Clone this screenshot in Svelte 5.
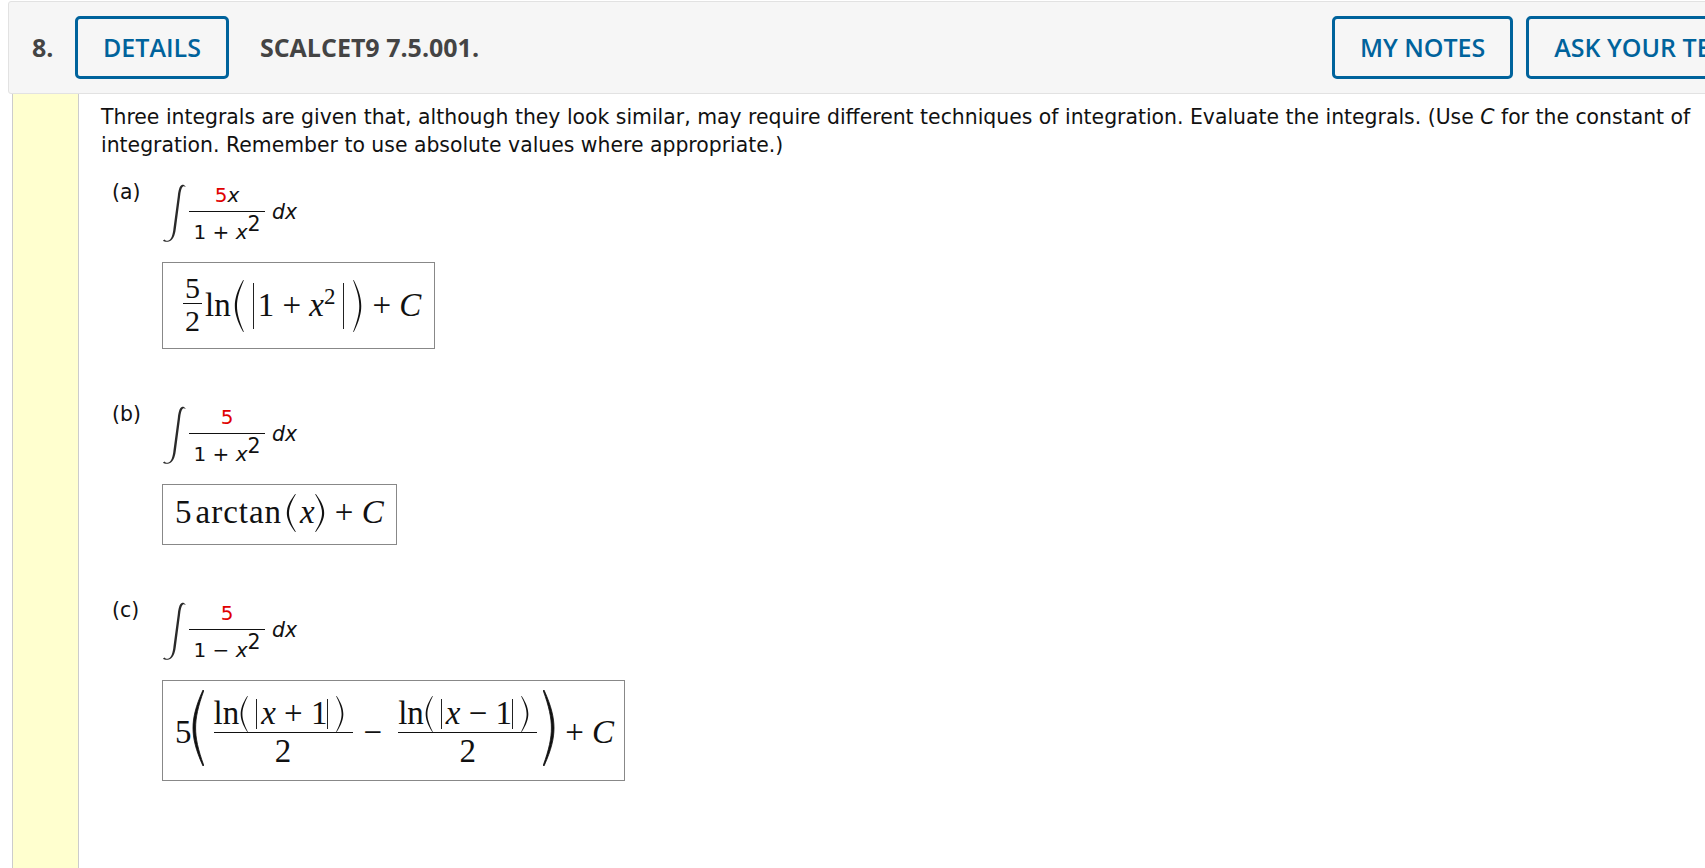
<script>
  const parts = [
    { label: '(a)', num: '5', numVar: 'x', sign: '+' },
    { label: '(b)', num: '5', numVar: '', sign: '+' },
    { label: '(c)', num: '5', numVar: '', sign: '−' }
  ];
</script>

{#snippet paren(h, w, right, cls)}
  <svg class="paren {cls}" class:right width={w} height={h} viewBox="0 0 12 60" preserveAspectRatio="none" aria-hidden="true">
    <path d="M11 0 C3.5 13 1 22 1 30 C1 38 3.5 47 11 60 L11.8 59.6 C6 47 3.6 38 3.6 30 C3.6 22 6 13 11.8 .4Z" />
  </svg>
{/snippet}

{#snippet integrand(part)}
  <div class="integrand">
    <svg class="integral" width="24" height="58" viewBox="0 0 24 58" aria-hidden="true">
      <path d="M23.5 2.5 C22.5 1 21 .5 19.8 1 C17.5 2 16.5 6 15.8 12 L11.5 44 C11 50 9.5 55.5 6.5 56.5 C5 57 3.5 56.8 2.5 55.5 L1 56.5 C2 57.8 4 58 6 57.8 C10.5 57.2 13 52 13.8 45 L18 13 C18.6 7 19.5 3.5 21 2.5 C22 2 22.8 2.3 23.2 3 Z" />
    </svg>
    <div class="frac">
      <div class="num"><span class="red">{part.num}</span>{#if part.numVar}<i>{part.numVar}</i>{/if}</div>
      <div class="den">1 {part.sign} <i>x</i><sup>2</sup></div>
    </div>
    <span class="dx"><i>dx</i></span>
  </div>
{/snippet}

{#snippet absFrac(sign)}
  <span class="mfrac wide">
    <span class="mnum">
      <span>ln</span>
      {@render paren(36, 8, false, 'ml1')}
      <span class="bar ml8"></span>
      <span class="ml4"><i>x</i> {sign} 1</span>
      <span class="bar"></span>
      {@render paren(36, 8, true, 'ml8')}
    </span>
    <span class="mden">2</span>
  </span>
{/snippet}

<div class="page">
  <header class="qhead">
    <span class="qnum">8.</span>
    <button class="btn">DETAILS</button>
    <span class="qtitle">SCALCET9 7.5.001.</span>
    <button class="btn">MY NOTES</button>
    <button class="btn">ASK YOUR TEACHER</button>
  </header>

  <div class="qbody">
    <div class="strip"></div>
    <div class="content">
      <p class="intro">Three integrals are given that, although they look similar, may require different techniques of integration. Evaluate the integrals. (Use <i>C</i> for the constant of<br />integration. Remember to use absolute values where appropriate.)</p>

      <div class="part">
        <span class="label">{parts[0].label}</span>
        <div class="work">
          {@render integrand(parts[0])}
          <div class="answer ans-a math">
            <span class="mfrac small"><span class="mnum">5</span><span class="mden">2</span></span>
            <span>ln</span>
            {@render paren(52, 10, false, 'ml3')}
            <span class="bar tall ml9"></span>
            <span class="ml4">1 + <i>x</i><sup>2</sup></span>
            <span class="bar tall ml8"></span>
            {@render paren(52, 9, true, 'ml9')}
            <span class="ml10">+ <i>C</i></span>
          </div>
        </div>
      </div>

      <div class="part">
        <span class="label">{parts[1].label}</span>
        <div class="work">
          {@render integrand(parts[1])}
          <div class="answer ans-b math">
            <span>5</span>
            <span class="fn ml4">arctan</span>
            {@render paren(38, 10, false, 'ml4')}
            <i class="ml4">x</i>
            {@render paren(38, 10, true, '')}
            <span class="ml10">+ <i>C</i></span>
          </div>
        </div>
      </div>

      <div class="part">
        <span class="label">{parts[2].label}</span>
        <div class="work">
          {@render integrand(parts[2])}
          <div class="answer ans-c math">
            <span>5</span>
            {@render paren(76, 12, false, 'big')}
            {@render absFrac('+')}
            <span class="minus">−</span>
            {@render absFrac('−')}
            {@render paren(76, 12, true, 'big close')}
            <span class="ml10">+ <i>C</i></span>
          </div>
        </div>
      </div>
    </div>
  </div>
</div>

<style>
  :global(html), :global(body) {
    overflow: hidden;
    background: #fff;
  }

  .page {
    min-height: 100vh;
    display: flex;
    flex-direction: column;
    padding-top: 1px;
    box-sizing: border-box;
  }

  .qhead {
    display: flex;
    align-items: center;
    flex: none;
    height: 93px;
    box-sizing: border-box;
    margin: 0 -4px 0 8px;
    padding-left: 23px;
    overflow: hidden;
    background: #f6f6f6;
    border: 1px solid #e2e2e2;
    border-radius: 3px;
    font-family: "Open Sans", sans-serif;
    font-size: 25px;
    font-weight: 600;
    color: #444;
  }

  .qnum {
    flex: none;
    width: 43px;
    padding-bottom: 2px;
    font-weight: 700;
  }

  .qtitle {
    flex: none;
    width: 1072px;
    margin-left: 18px;
    padding-bottom: 2px;
    font-weight: 700;
  }

  .btn {
    flex: none;
    height: 63px;
    padding: 0 25px 2px;
    margin-right: 13px;
    background: transparent;
    border: 3px solid #00639c;
    border-radius: 5px;
    color: #00639c;
    font: inherit;
  }

  .qbody {
    flex: 1;
    display: flex;
  }

  .strip {
    flex: none;
    width: 65px;
    margin-left: 12px;
    background: #ffffcf;
    border-left: 1px solid #ccc;
    border-right: 1px solid #ccc;
  }

  .content {
    flex: 1;
    padding-left: 22px;
    font-family: "DejaVu Sans", sans-serif;
    font-size: 20.4px;
    color: #111;
  }

  .intro {
    margin: 9px 0 0;
    line-height: 28px;
    white-space: nowrap;
  }

  .part {
    display: flex;
    margin: 20px 0 52px;
  }

  .part + .part {
    margin-top: 0;
  }

  .label {
    width: 50px;
    margin-left: 11px;
    line-height: 27px;
  }

  .integrand {
    display: flex;
    align-items: center;
    height: 65px;
    margin-bottom: 18px;
    font-size: 20px;
  }

  .integral {
    flex: none;
    fill: #2a2a2a;
    margin: 2px 3px 0 0;
  }

  .frac {
    display: flex;
    flex-direction: column;
    align-items: center;
    width: 76px;
  }

  .num {
    width: 100%;
    text-align: center;
    line-height: 32px;
    padding-top: 2px;
    border-bottom: 1px solid #111;
  }

  .den {
    padding-top: 6px;
    line-height: 28px;
    white-space: pre;
  }

  .den sup {
    font-size: 20.5px;
    line-height: 0;
    vertical-align: 8px;
  }

  .red {
    color: #e00000;
  }

  .dx {
    margin-left: 7px;
    font-size: 20.4px;
  }

  .answer {
    display: inline-flex;
    align-items: center;
    box-sizing: border-box;
    border: 1px solid #888;
    color: #111;
    white-space: pre;
  }

  .ans-a {
    height: 87px;
    padding: 0 13px 0 20px;
  }

  .ans-b {
    height: 61px;
    padding: 0 12px 4px 12px;
  }

  .ans-c {
    height: 101px;
    padding: 3px 10px 0 12px;
  }

  .math {
    font-family: "Liberation Serif", serif;
    font-size: 33px;
  }

  .math sup {
    font-size: 23px;
    line-height: 0;
    vertical-align: 12px;
  }

  .fn {
    letter-spacing: 1px;
  }

  .paren {
    flex: none;
    fill: #111;
  }

  .paren.right {
    transform: scaleX(-1);
  }

  .paren.big {
    margin-bottom: 8px;
    stroke: #111;
    stroke-width: 0.7px;
    vector-effect: non-scaling-stroke;
  }

  .paren.close {
    margin-left: 6px;
  }

  .bar {
    flex: none;
    display: inline-block;
    width: 1px;
    height: 30px;
    background: #222;
  }

  .bar.tall {
    height: 46px;
  }

  .mfrac {
    display: inline-flex;
    flex-direction: column;
    align-items: center;
  }

  .mfrac .mnum {
    display: flex;
    align-items: center;
    align-self: stretch;
    justify-content: center;
    border-bottom: 1.5px solid #111;
  }

  .mfrac.small {
    width: 19px;
    margin-right: 3px;
    font-size: 30px;
  }

  .mfrac.small .mnum {
    height: 30px;
  }

  .mfrac.small .mden {
    line-height: 34px;
  }

  .mfrac.wide {
    width: 139px;
    margin-left: 10px;
  }

  .mfrac.wide .mnum {
    height: 36px;
    justify-content: flex-start;
  }

  .mfrac.wide .mden {
    line-height: 36px;
  }

  .minus {
    margin: 0 6px 0 11px;
  }

  .ml1 { margin-left: 1px; }
  .ml3 { margin-left: 3px; }
  .ml4 { margin-left: 4px; }
  .ml8 { margin-left: 8px; }
  .ml9 { margin-left: 9px; }
  .ml10 { margin-left: 10px; }
</style>
